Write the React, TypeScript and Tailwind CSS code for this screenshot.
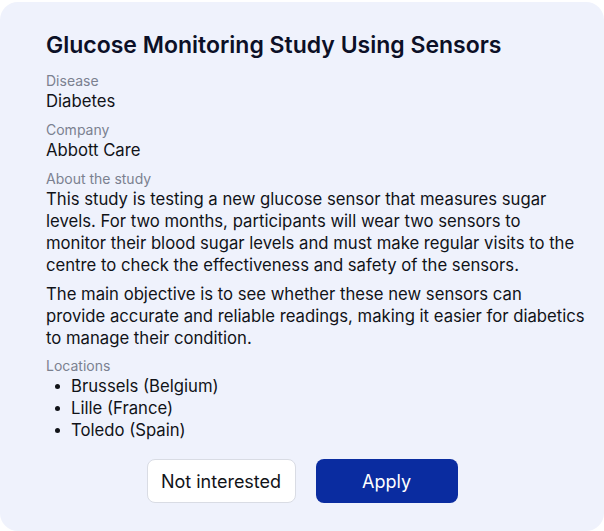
const locations = ["Brussels (Belgium)", "Lille (France)", "Toledo (Spain)"];

export default function App() {
  return (
    <main className="min-h-screen bg-white pt-[2px] font-['Inter',sans-serif]">
      <section className="flex h-[529px] flex-col rounded-[18px] bg-[#eff2fc] pl-[46px] pr-[4px] pt-[29px]">
        <h1 className="text-[23px] leading-[28px] font-semibold text-[#0c1027]">
          Glucose Monitoring Study Using Sensors
        </h1>

        <div className="mt-[12px] flex flex-col gap-[8px] text-[16.7px] leading-[22px] text-[#111318]">
          <div>
            <p className="text-[14px] leading-[19px] text-[#7b8190]">Disease</p>
            <p>Diabetes</p>
          </div>
          <div>
            <p className="text-[14px] leading-[19px] text-[#7b8190]">Company</p>
            <p>Abbott Care</p>
          </div>
          <div>
            <p className="text-[14px] leading-[19px] text-[#7b8190]">About the study</p>
            <div className="flex flex-col gap-[7px] whitespace-nowrap">
              <p>
                This study is testing a new glucose sensor that measures sugar
                <br />
                levels. For two months, participants will wear two sensors to
                <br />
                monitor their blood sugar levels and must make regular visits to the
                <br />
                centre to check the effectiveness and safety of the sensors.
              </p>
              <p>
                The main objective is to see whether these new sensors can
                <br />
                provide accurate and reliable readings, making it easier for diabetics
                <br />
                to manage their condition.
              </p>
            </div>
          </div>
          <div className="mt-[-1px]">
            <p className="text-[14px] leading-[19px] text-[#7b8190]">Locations</p>
            <ul>
              {locations.map((place) => (
                <li key={place} className="flex items-center">
                  <span className="ml-[9px] mr-[11px] h-[5px] w-[5px] rounded-full bg-[#111318]" />
                  {place}
                </li>
              ))}
            </ul>
          </div>
        </div>

        <div className="mt-[18px] flex justify-center gap-[20px] pr-[42px]">
          <button className="h-[44px] w-[149px] rounded-[8px] border border-[#d9dce4] bg-white text-[18px] text-[#111318]">
            Not interested
          </button>
          <button className="h-[44px] w-[142px] rounded-[8px] bg-[#0a2ca0] text-[18px] text-white">
            Apply
          </button>
        </div>
      </section>
    </main>
  );
}
